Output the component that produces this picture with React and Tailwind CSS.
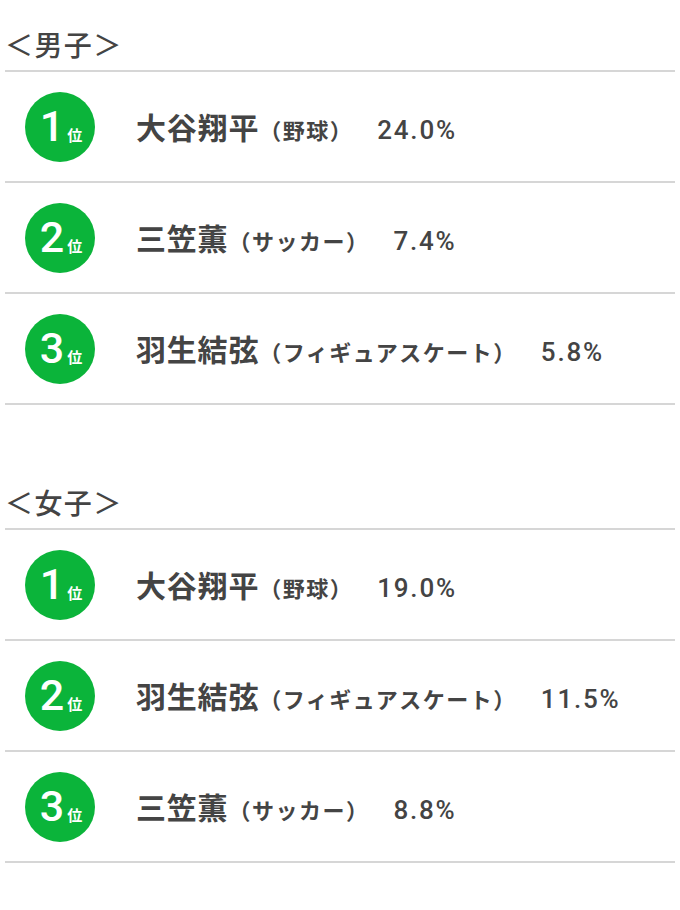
const sections = [
  {
    title: "＜男子＞",
    rows: [
      { rank: 1, name: "大谷翔平", sport: "（野球）", pct: "24.0%" },
      { rank: 2, name: "三笠薫", sport: "（サッカー）", pct: "7.4%" },
      { rank: 3, name: "羽生結弦", sport: "（フィギュアスケート）", pct: "5.8%" },
    ],
  },
  {
    title: "＜女子＞",
    rows: [
      { rank: 1, name: "大谷翔平", sport: "（野球）", pct: "19.0%" },
      { rank: 2, name: "羽生結弦", sport: "（フィギュアスケート）", pct: "11.5%" },
      { rank: 3, name: "三笠薫", sport: "（サッカー）", pct: "8.8%" },
    ],
  },
];

const latin = { fontFamily: 'Roboto, "Noto Sans CJK JP", sans-serif' };

const RankBadge = ({ rank }) => (
  <div className="w-[70px] h-[70px] rounded-full bg-[#0bb43a] text-white flex items-center justify-center shrink-0">
    <div className="flex items-baseline pl-[2px]">
      <span className="text-[43px] leading-none font-medium" style={latin}>
        {rank}
      </span>
      <span className="text-[15px] leading-none font-bold ml-[3px]">位</span>
    </div>
  </div>
);

const RankRow = ({ row }) => (
  <div className="h-[111px] border-b-2 border-[#d6d6d6] flex items-center pl-[20px]">
    <RankBadge rank={row.rank} />
    <div className="ml-[41px] flex items-baseline tracking-wider">
      <span className="text-[30px] font-bold">{row.name}</span>
      <span className="text-[22px] font-bold tracking-[1.5px]">{row.sport}</span>
      <span className="text-[26px] font-medium ml-[24px] tracking-[1.8px]" style={latin}>
        {row.pct}
      </span>
    </div>
  </div>
);

export default function App() {
  return (
    <div
      className="w-[680px] min-h-[910px] bg-white text-[#444] px-[5px]"
      style={{ fontFamily: '"Noto Sans CJK JP", "Noto Sans", sans-serif' }}
    >
      {sections.map((section, i) => (
        <div key={section.title} className={i > 0 ? "mt-[53px]" : ""}>
          <h2 className="pt-[24px] pb-[6px] text-[28px] leading-[40px] font-medium tracking-wider border-b-2 border-[#d6d6d6]">
            {section.title}
          </h2>
          {section.rows.map((row) => (
            <RankRow key={row.rank} row={row} />
          ))}
        </div>
      ))}
    </div>
  );
}
